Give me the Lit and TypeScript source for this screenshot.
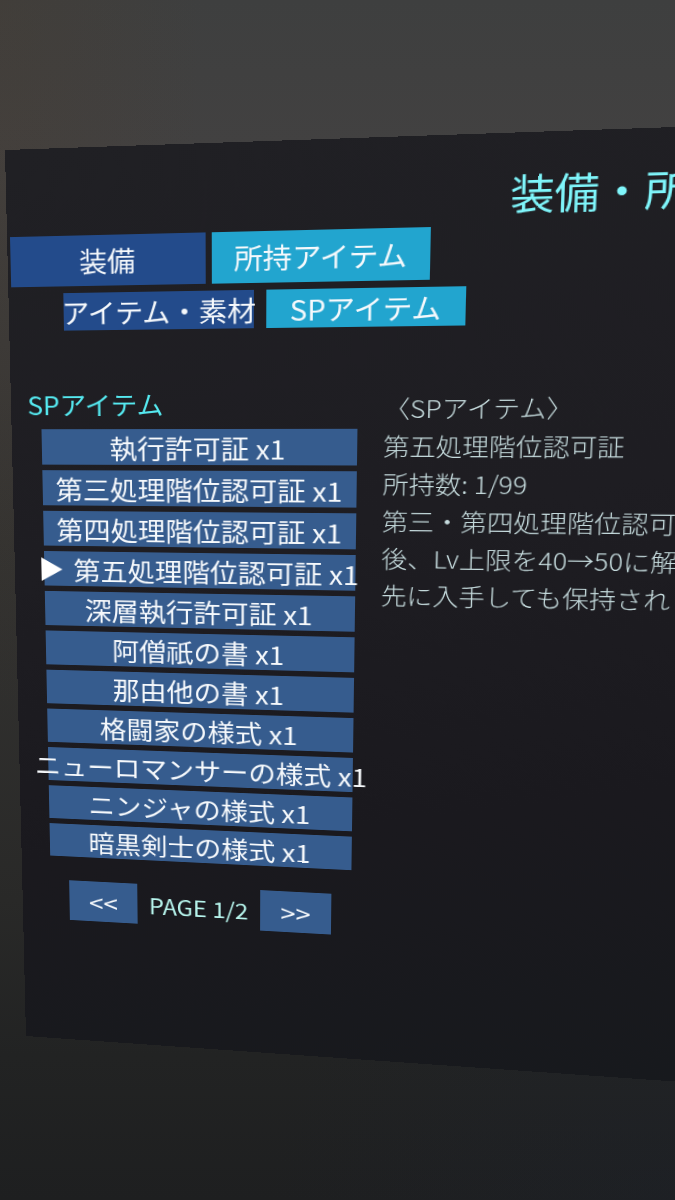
import { LitElement, html, css } from "lit";
import { customElement, state } from "lit/decorators.js";
import { classMap } from "lit/directives/class-map.js";

const ITEMS = [
  "執行許可証",
  "第三処理階位認可証",
  "第四処理階位認可証",
  "第五処理階位認可証",
  "深層執行許可証",
  "阿僧祇の書",
  "那由他の書",
  "格闘家の様式",
  "ニューロマンサーの様式",
  "ニンジャの様式",
  "暗黒剣士の様式",
];

const DETAIL = [
  "〈SPアイテム〉",
  "第五処理階位認可証",
  "所持数: 1/99",
  "第三・第四処理階位認可",
  "後、Lv上限を40→50に解",
  "先に入手しても保持され",
];

@customElement("app-root")
export class AppRoot extends LitElement {
  @state() private selected = 3;

  static styles = css`
    :host {
      display: block;
      font-family: "Noto Sans CJK JP", "Noto Sans", sans-serif;
    }
    .wall {
      box-sizing: border-box;
      min-height: 100vh;
      overflow: hidden;
      padding: 150px 0 0 5px;
      background:
        radial-gradient(ellipse 30% 60% at 0% 0%, rgba(74, 58, 42, 0.26), transparent),
        radial-gradient(ellipse 60% 30% at 100% 100%, rgba(28, 34, 46, 0.3), transparent),
        linear-gradient(to bottom, #3e3f3f 0%, #424141 12%, #343331 45%, #292928 75%, #222323 88%, #1e1f20 100%);
    }
    /* The board hangs in the room turned away from the viewer. */
    .board {
      box-sizing: border-box;
      width: 110%;
      padding: 29px 0 144px;
      background: linear-gradient(170deg, #202024 0%, #1e1d22 40%, #1a191e 70%, #17191d 100%);
      transform-origin: 0 0;
      transform: matrix3d(
        0.9886, -0.0339, 0, -0.0001166,
        0.0234, 0.9886, 0, 0.0001036,
        0, 0, 1, 0,
        0, 0, 0, 1
      );
    }
    .title {
      margin: 0;
      padding: 0 0 4px 484px;
      font-size: 40px;
      line-height: 56px;
      font-weight: 400;
      white-space: nowrap;
      color: #7ff6fb;
    }
    button {
      border: 0;
      border-radius: 0;
      margin: 0;
      padding: 0;
      display: flex;
      align-items: center;
      justify-content: center;
      font: inherit;
      font-size: 28px;
      line-height: 38px;
      white-space: nowrap;
      color: #f6f9fc;
      cursor: pointer;
    }
    .tabs {
      display: grid;
      grid-template-columns: 195px 208px;
      grid-auto-rows: 52px;
      gap: 6px;
      padding-left: 3px;
    }
    .subtabs {
      display: grid;
      grid-template-columns: 189px 189px;
      grid-auto-rows: 39px;
      gap: 12px;
      padding: 7px 0 0 56px;
    }
    .tab {
      background: #234b8b;
    }
    .tab.active {
      background: #22a5cf;
    }
    .columns {
      display: flex;
      align-items: flex-start;
      gap: 25px;
      padding-top: 58px;
    }
    .left {
      flex: none;
      width: 315px;
      padding-left: 31px;
    }
    .heading {
      margin: 0 0 6px -14px;
      font-size: 27px;
      line-height: 40px;
      font-weight: 400;
      color: #55e9f0;
    }
    .list {
      list-style: none;
      margin: 0;
      padding: 0;
      display: grid;
      grid-template-columns: minmax(0, 1fr);
      gap: 6px;
    }
    .item {
      box-sizing: border-box;
      width: 100%;
      height: 38px;
      padding-top: 2px;
      background: #365c8e;
    }
    .cursor {
      flex: none;
      width: 22px;
      height: 26px;
      margin-right: 12px;
      fill: #ffffff;
    }
    .pager {
      display: flex;
      justify-content: space-between;
      align-items: center;
      padding: 28px 20px 0;
    }
    .step {
      width: 73px;
      height: 47px;
      background: #365c8e;
    }
    .page {
      font-size: 25px;
      line-height: 40px;
      color: #b6f4ec;
    }
    .detail {
      flex: none;
      padding-top: 5px;
      font-size: 25px;
      line-height: 39px;
      font-weight: 300;
      white-space: nowrap;
      color: #c6dcde;
    }
    .detail p {
      margin: 0;
    }
  `;

  render() {
    return html`
      <main class="wall">
        <section class="board">
          <h1 class="title">装備・所</h1>
          <nav class="tabs">
            <button class="tab">装備</button>
            <button class="tab active">所持アイテム</button>
          </nav>
          <nav class="subtabs">
            <button class="tab">アイテム・素材</button>
            <button class="tab active">SPアイテム</button>
          </nav>
          <div class="columns">
            <div class="left">
              <h2 class="heading">SPアイテム</h2>
              <ul class="list">
                ${ITEMS.map(
                  (name, i) => html`<li>
                    <button
                      class=${classMap({ item: true, selected: i === this.selected })}
                      @click=${() => (this.selected = i)}
                    >
                      ${i === this.selected
                        ? html`<svg class="cursor" viewBox="0 0 22 26" aria-hidden="true"><path d="M0 0L22 13L0 26Z" /></svg>`
                        : null}<span>${name} x1</span>
                    </button>
                  </li>`,
                )}
              </ul>
              <div class="pager">
                <button class="step">&lt;&lt;</button>
                <span class="page">PAGE 1/2</span>
                <button class="step">&gt;&gt;</button>
              </div>
            </div>
            <article class="detail">${DETAIL.map((line) => html`<p>${line}</p>`)}</article>
          </div>
        </section>
      </main>
    `;
  }
}
